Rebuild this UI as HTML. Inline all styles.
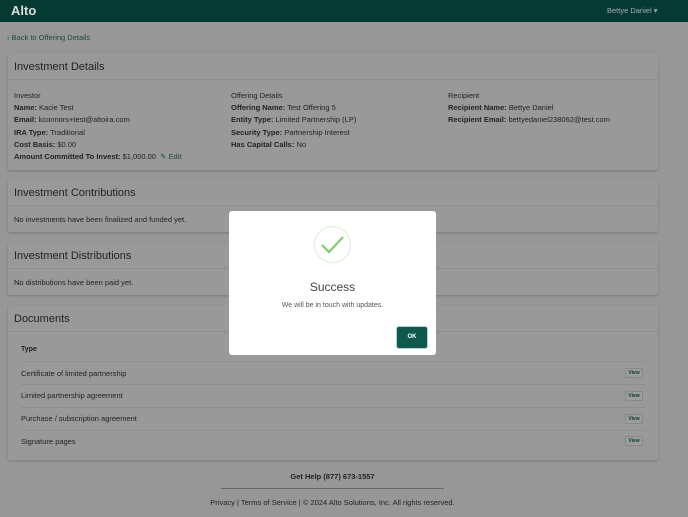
<!DOCTYPE html>
<html><head><style>
*{margin:0;padding:0;box-sizing:border-box}
body{width:688px;height:517px;background:#979797;font-family:"Liberation Sans",sans-serif;color:#222;position:relative;overflow:hidden;font-size:7.5px}
.a{position:absolute;white-space:nowrap}
.hdr{position:absolute;left:0;top:0;width:688px;height:22px;background:#053a32}
.card{position:absolute;left:8px;width:650px;background:#999;box-shadow:0 1px 2px rgba(0,0,0,.2);border-radius:2px}
.ttl{font-size:11px;color:#222}
.line{position:absolute;left:0;right:0;height:1px;background:#8e8e8e}
b{font-weight:bold}
.row{position:absolute;left:13px;right:13px;height:1px;background:#8e8e8e}
.v{position:absolute;left:617px;width:18px;height:10px;border:1px solid #888;background:#9c9c9c;font-size:5px;color:#0b3a30;text-align:center;line-height:8px;font-weight:bold;border-radius:1px}
.modal{position:absolute;left:229px;top:211px;width:207px;height:144px;background:#fff;border-radius:3px}
</style></head><body>
<div class="hdr"></div>
<div class="a" style="left:11px;top:3px;font-size:13px;font-weight:bold;color:#ddd">Alto</div>
<div class="a" style="left:607px;top:6px;font-size:7.5px;color:#aab">Bettye Daniel ▾</div>
<div class="a" style="left:7px;top:33px;font-size:7.5px;color:#1f4a3f">‹ Back to Offering Details</div>

<div class="card" style="top:53px;height:117px">
<div class="a ttl" style="left:6px;top:8px">Investment Details</div>
<div class="line" style="top:26px"></div>
<div class="a" style="left:6px;top:37px;font-size:7.5px;line-height:12.2px">Investor<br><b>Name:</b> Kacie Test<br><b>Email:</b> kconnors+test@altoira.com<br><b>IRA Type:</b> Traditional<br><b>Cost Basis:</b> $0.00<br><b>Amount Committed To Invest:</b> $1,000.00 &nbsp;<span style="color:#1f4a3f">✎ Edit</span></div>
<div class="a" style="left:223px;top:37px;font-size:7.5px;line-height:12.2px">Offering Details<br><b>Offering Name:</b> Test Offering 5<br><b>Entity Type:</b> Limited Partnership (LP)<br><b>Security Type:</b> Partnership Interest<br><b>Has Capital Calls:</b> No</div>
<div class="a" style="left:440px;top:37px;font-size:7.5px;line-height:12.2px">Recipient<br><b>Recipient Name:</b> Bettye Daniel<br><b>Recipient Email:</b> bettyedaniel238062@test.com</div>
</div>

<div class="card" style="top:180px;height:52px">
<div class="a ttl" style="left:6px;top:7px">Investment Contributions</div>
<div class="line" style="top:25px"></div>
<div class="a" style="left:6px;top:35px">No investments have been finalized and funded yet.</div>
</div>

<div class="card" style="top:243px;height:52px">
<div class="a ttl" style="left:6px;top:7px">Investment Distributions</div>
<div class="line" style="top:25px"></div>
<div class="a" style="left:6px;top:35px">No distributions have been paid yet.</div>
</div>

<div class="card" style="top:305px;height:155px">
<div class="a ttl" style="left:6px;top:8px">Documents</div>
<div class="line" style="top:26px"></div>
<div class="a" style="left:13px;top:41px;font-weight:bold;font-size:7px">Type</div>
<div class="row" style="top:56px"></div>
<div class="a" style="left:13px;top:64px">Certificate of limited partnership</div><div class="v" style="top:63px">View</div>
<div class="row" style="top:79px"></div>
<div class="a" style="left:13px;top:86px">Limited partnership agreement</div><div class="v" style="top:86px">View</div>
<div class="row" style="top:102px"></div>
<div class="a" style="left:13px;top:109px">Purchase / subscription agreement</div><div class="v" style="top:109px">View</div>
<div class="row" style="top:125px"></div>
<div class="a" style="left:13px;top:132px">Signature pages</div><div class="v" style="top:131px">View</div>
</div>

<div class="a" style="left:0;width:665px;text-align:center;top:472px;font-weight:bold;font-size:7.5px">Get Help (877) 673-1557</div>
<div class="a" style="left:221px;top:488px;width:223px;height:1px;background:#666"></div>
<div class="a" style="left:0;width:665px;text-align:center;top:498px;font-size:7.5px">Privacy | Terms of Service | © 2024 Alto Solutions, Inc. All rights reserved.</div>

<div class="modal">
<svg class="a" style="left:84px;top:14px" width="39" height="39" viewBox="0 0 39 39"><circle cx="19.5" cy="19.5" r="18" fill="none" stroke="#e3f3dc" stroke-width="1.5"/><path d="M9 20 L16 27 L30 12" fill="none" stroke="#7ccf6a" stroke-width="2.2"/></svg>
<div class="a" style="left:0;width:207px;text-align:center;top:69px;font-size:12px;color:#444">Success</div>
<div class="a" style="left:0;width:207px;text-align:center;top:91px;font-size:7px;color:#555">We will be in touch with updates.</div>
<div class="a" style="left:168px;top:116px;width:30px;height:21px;background:#0d5a4c;border-radius:2px;color:#fff;font-size:6px;font-weight:bold;text-align:center;line-height:21px;box-shadow:0 0 0 1px #bcd">OK</div>
</div>
</body></html>
